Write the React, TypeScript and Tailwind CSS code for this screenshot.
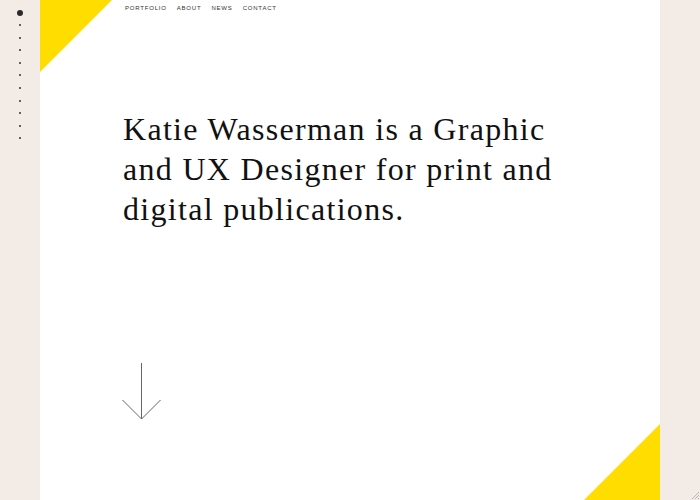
import React from 'react';

const navItems = ['Portfolio', 'About', 'News', 'Contact'];

const Dots = () => (
    <div className="flex flex-col items-center pt-[10px]">
        <div className="w-[6px] h-[6px] rounded-full bg-[#2a2a2a]" />
        <div className="flex flex-col items-center gap-[10.6px] mt-[8px]">
            {Array.from({ length: 10 }).map((_, i) => (
                <div key={i} className="w-[2px] h-[2px] rounded-full bg-[#333]" />
            ))}
        </div>
    </div>
);

const Arrow = () => (
    <svg width="40" height="60" viewBox="0 0 40 60" className="block">
        <line x1="19.5" y1="2" x2="19.5" y2="58" stroke="#666" strokeWidth="1" />
        <polyline points="0.5,39 19.5,58 38.5,39" fill="none" stroke="#666" strokeWidth="1" />
    </svg>
);

export default function App() {
    return (
        <div className="w-[700px] h-[500px] flex bg-[#f3ebe6] overflow-hidden">
            <aside className="w-[40px] shrink-0">
                <Dots />
            </aside>

            <main className="relative flex-1 bg-white flex flex-col">
                {/* corner triangles */}
                <svg className="absolute left-0 top-0" width="73" height="73" viewBox="0 0 73 73">
                    <polygon points="0,0 72,0 0,72" fill="#ffdd00" />
                </svg>
                <svg className="absolute right-0 bottom-0" width="76" height="76" viewBox="0 0 76 76">
                    <polygon points="76,0 76,76 0,76" fill="#ffdd00" />
                </svg>

                <nav className="flex gap-[10px] pl-[85px] pt-[5px] text-[6px] leading-[7px] tracking-[0.8px] uppercase text-[#333]" style={{ fontFamily: '"Liberation Sans", Arial, sans-serif' }}>
                    {navItems.map(n => <span key={n}>{n}</span>)}
                </nav>

                <h1
                    className="pl-[83px] mt-[97px] text-[32px] leading-[40px] tracking-[1.3px] text-[#111] font-normal whitespace-nowrap"
                    style={{ fontFamily: '"Liberation Serif", "Times New Roman", serif' }}
                >
                    Katie Wasserman is a Graphic<br />
                    and UX Designer for print and<br />
                    digital publications.
                </h1>

                <div className="pl-[82px] mt-[132px]">
                    <Arrow />
                </div>
            </main>

            <aside className="w-[40px] shrink-0 flex flex-col justify-end items-end">
                <svg width="10" height="10" viewBox="0 0 10 10" className="block">
                    <line x1="9" y1="2" x2="2" y2="9" stroke="#aaa" strokeWidth="0.8" />
                    <line x1="9" y1="5" x2="5" y2="9" stroke="#aaa" strokeWidth="0.8" />
                    <line x1="9" y1="8" x2="8" y2="9" stroke="#aaa" strokeWidth="0.8" />
                </svg>
            </aside>
        </div>
    );
}
